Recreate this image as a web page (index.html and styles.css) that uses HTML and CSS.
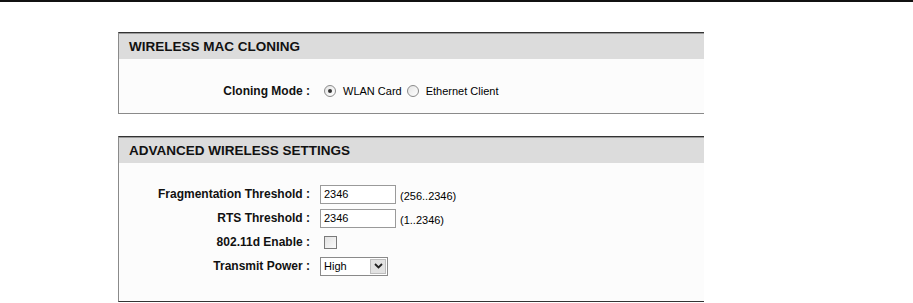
FILE: index.html
```html
<!DOCTYPE html>
<html lang="en">
<head>
  <meta charset="UTF-8" />
  <title>Advanced Wireless</title>
  <link rel="stylesheet" href="styles.css">
</head>
<body>
  <div class="page">
    <div class="panel panel-clone">
      <div class="panel-title">WIRELESS MAC CLONING</div>
      <div class="panel-body">
        <div class="row">
          <label class="row-label">Cloning Mode :</label>
          <div class="row-field">
            <input type="radio" name="clone" id="clone-wlan" checked />
            <label for="clone-wlan" class="opt">WLAN Card</label>
            <input type="radio" name="clone" id="clone-eth" />
            <label for="clone-eth" class="opt">Ethernet Client</label>
          </div>
        </div>
      </div>
    </div>

    <div class="panel panel-adv">
      <div class="panel-title">ADVANCED WIRELESS SETTINGS</div>
      <div class="panel-body">
        <div class="row">
          <label class="row-label" for="frag">Fragmentation Threshold :</label>
          <div class="row-field">
            <input type="text" id="frag" value="2346" />
            <span class="hint">(256..2346)</span>
          </div>
        </div>
        <div class="row">
          <label class="row-label" for="rts">RTS Threshold :</label>
          <div class="row-field">
            <input type="text" id="rts" value="2346" />
            <span class="hint">(1..2346)</span>
          </div>
        </div>
        <div class="row">
          <label class="row-label" for="d11">802.11d Enable :</label>
          <div class="row-field">
            <input type="checkbox" id="d11" />
          </div>
        </div>
        <div class="row">
          <label class="row-label">Transmit Power :</label>
          <div class="row-field">
            <div class="select">
              <span class="select-value">High</span>
              <span class="select-btn">
                <svg width="9" height="6" viewBox="0 0 9 6"><path d="M1 1 L4.5 4.5 L8 1" fill="none" stroke="#222" stroke-width="1.8"/></svg>
              </span>
            </div>
          </div>
        </div>
      </div>
    </div>
  </div>
</body>
</html>
```

FILE: styles.css
```css
* {
  box-sizing: border-box;
}
body {
  margin: 0;
  background: #fff;
  font-family: 'Liberation Sans', Arial, sans-serif;
  font-size: 11px;
  color: #000;
}
.page {
  border-top: 2px solid #111;
  padding: 30px 0 0 118px;
}

.panel {
  width: 586px;
  border-top: 1px solid #333;
  border-left: 1px solid #8a8a8a;
  border-bottom: 1px solid #8a8a8a;
  background: #fcfcfc;
}
.panel + .panel {
  margin-top: 22px;
}
.panel-title {
  height: 26px;
  line-height: 25px;
  padding-left: 10px;
  background: #dcdcdc;
  border-top: 1px solid #9a9a9a;
  font-size: 13.5px;
  font-weight: bold;
  color: #111;
}

.panel-clone .panel-body {
  padding: 22px 0 12px;
}
.panel-adv {
  border-bottom-color: #333;
}
.panel-adv .panel-body {
  padding: 19px 0 23px;
}

.row {
  display: flex;
  align-items: center;
  height: 24px;
}
.panel-clone .row {
  height: 20px;
}
.row-label {
  width: 191px;
  flex: none;
  text-align: right;
  font-size: 12px;
  font-weight: bold;
  color: #111;
}
.row-field {
  display: flex;
  align-items: center;
  padding-left: 10px;
}

/* 라디오 */
input[type="radio"] {
  appearance: none;
  width: 12px;
  height: 12px;
  margin: 0 7px 0 4px;
  border: 1px solid #8a8a8a;
  border-radius: 50%;
  background: linear-gradient(135deg, #e4e4e4, #fff);
  display: flex;
  align-items: center;
  justify-content: center;
}
input[type="radio"]:checked::after {
  content: "";
  width: 4px;
  height: 4px;
  border-radius: 50%;
  background: #333;
}
.opt + input[type="radio"] {
  margin-left: 5px;
}
.opt {
  font-size: 11px;
}

input[type="text"] {
  width: 76px;
  height: 19px;
  margin: 0;
  padding: 0 3px;
  border: 1px solid #9a9a9a;
  background: #fff;
  font-family: inherit;
  font-size: 11px;
  color: #000;
}
.hint {
  margin-left: 4px;
  padding-top: 3px;
  font-size: 11px;
}

input[type="checkbox"] {
  appearance: none;
  width: 13px;
  height: 13px;
  margin: 0 0 0 4px;
  border: 1px solid #7a7a7a;
  background: linear-gradient(135deg, #e2e2e2, #fafafa);
}

.select {
  display: flex;
  width: 68px;
  height: 19px;
  border: 1px solid #8a8a8a;
  background: #fff;
}
.select-value {
  flex: 1;
  padding-left: 3px;
  line-height: 17px;
  font-size: 11px;
}
.select-btn {
  width: 16px;
  margin: 1px;
  display: flex;
  align-items: center;
  justify-content: center;
  background: #e2e2e2;
  border: 1px solid #bdbdbd;
}
```
